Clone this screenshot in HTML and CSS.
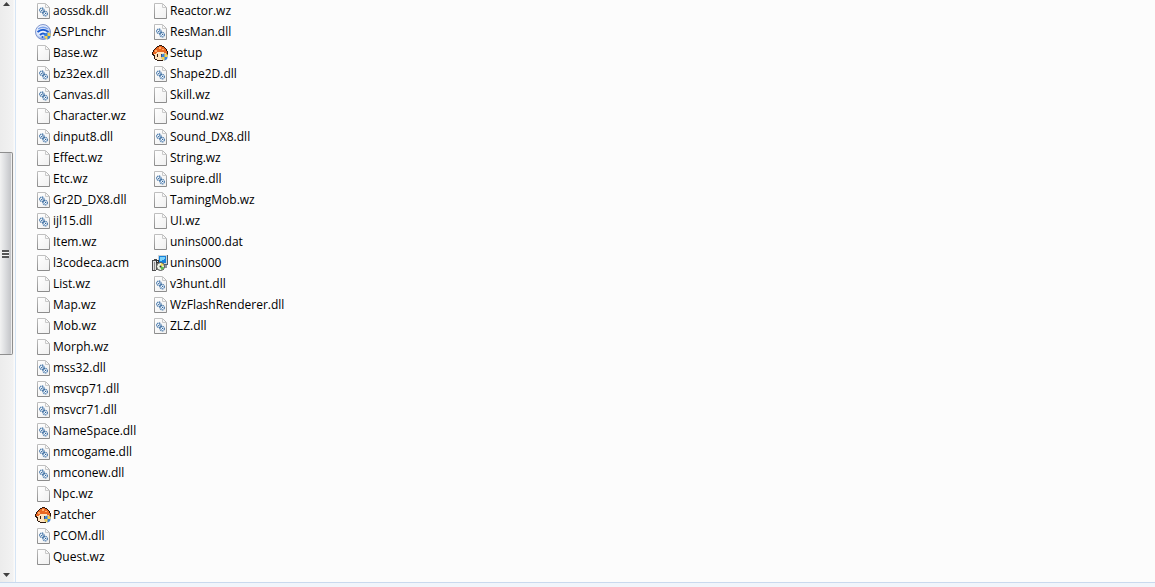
FILE: index.html
```html
<!DOCTYPE html>
<html lang="en">
<head>
  <meta charset="UTF-8">
  <title>Files</title>
  <meta name="viewport" content="width=device-width, initial-scale=1">
  <link rel="stylesheet" href="styles.css">
</head>
<body>

  <!-- Icon set -->
  <svg class="sprites" aria-hidden="true">
    <defs>
      <linearGradient id="paper" x1="0" y1="0" x2="1" y2="1">
        <stop offset="0" stop-color="#ffffff"/>
        <stop offset="1" stop-color="#f0f0f0"/>
      </linearGradient>
      <linearGradient id="edge" x1="0" y1="0" x2="0" y2="1">
        <stop offset="0" stop-color="#c0c0c0"/>
        <stop offset="1" stop-color="#8c8c8c"/>
      </linearGradient>
      <radialGradient id="ball" cx="0.4" cy="0.35" r="0.7">
        <stop offset="0" stop-color="#ffffff"/>
        <stop offset="0.6" stop-color="#dbe6fb"/>
        <stop offset="1" stop-color="#6286d2"/>
      </radialGradient>
    </defs>

    <symbol id="file" viewBox="0 0 16 16">
      <path d="M2.500 .5H10.500L14.500 4.500V15.500H2.500Z" fill="url(#paper)" stroke="url(#edge)"/>
      <path d="M10.500 1V4.500H14" fill="none" stroke="#cacaca"/>
    </symbol>

    <symbol id="dll" viewBox="0 0 16 16">
      <use href="#file"/>
      <g fill="#f2f8fe" stroke="#5783b0" stroke-width="1.300" stroke-dasharray="1.400 .5">
        <circle cx="6.800" cy="7.200" r="2.200"/>
        <circle cx="10.200" cy="10.700" r="2.200"/>
      </g>
      <path d="M6 8L8 6.500M7.500 10L10 7.800M9.500 11.500L11 10" stroke="#2f6399"/>
    </symbol>

    <symbol id="shield" viewBox="0 0 8 8">
      <path d="M4 0L7.500 1V4Q7.500 7 4 8Q.5 7 .5 4V1Z" fill="#3b83dc"/>
      <path d="M4 0L7.500 1V4H4ZM.5 4H4V8Q.5 7 .5 4Z" fill="#f3d04e"/>
    </symbol>

    <symbol id="launcher" viewBox="0 0 16 16">
      <circle cx="8" cy="8" r="7.500" fill="url(#ball)" stroke="#8298cd"/>
      <path d="M3 5Q8 1.500 13 5" fill="none" stroke="#7da3ea" stroke-width="1.500"/>
      <path d="M2.500 8Q8 3.500 13.500 8" fill="none" stroke="#1d5cd0" stroke-width="2"/>
      <path d="M5 11Q8 8 11 11" fill="none" stroke="#1d5cd0" stroke-width="2"/>
      <circle cx="7.500" cy="13" r="1" fill="#1d5cd0"/>
      <use href="#shield" x="9" y="8" width="7" height="8"/>
    </symbol>

    <symbol id="mushroom" viewBox="0 0 16 16" shape-rendering="crispEdges">
      <path d="M7 0H10V1H12V2H13V3H14V4H15V6H16V10H15V13H13V15H11V16H5V15H3V14H2V11H1V10H0V7H1V5H2V4H3V3H4V2H5V1H7Z" fill="#2c160c"/>
      <path d="M7 1H10V2H12V3H13V4H14V6H15V9H14V8H12V7H5V8H4V9H1V7H2V5H3V4H4V3H5V2H7Z" fill="#e96723"/>
      <path d="M7 2H9V4H7ZM3 5H5V7H3ZM10 4H12V5H10Z" fill="#ffad69"/>
      <path d="M5 7H12V8H14V13H12V14H11V15H5V14H3V10H2V9H4V8H5Z" fill="#ffe3be"/>
      <path d="M5 9H6V12H5ZM9 9H10V12H9Z" fill="#3a1d0e"/>
      <use href="#shield" x="9" y="8" width="7" height="8" shape-rendering="auto"/>
    </symbol>

    <symbol id="installer" viewBox="0 0 16 16" shape-rendering="crispEdges">
      <path d="M6 0H16V10H6Z" fill="#53606c"/>
      <path d="M6 0H15V9H6Z" fill="#c9d2d8"/>
      <path d="M7 1H14V8H7Z" fill="#1682da"/>
      <path d="M8 2H13V4H12V5H10V6H8Z" fill="#7ed3fb"/>
      <path d="M11 10H15V13H11Z" fill="#8d969d"/>
      <path d="M0 5H2V4H5V15H4V16H0Z" fill="#4b4b4b"/>
      <path d="M1 6H4V15H1Z" fill="#e0e0e0"/>
      <path d="M2 7H3V15H2Z" fill="#8b8b8b"/>
      <path d="M4 5H7V8H4Z" fill="#333"/>
      <path d="M5 6H6V7H5Z" fill="#ddd"/>
      <g shape-rendering="auto">
        <circle cx="8.500" cy="11.500" r="4" fill="#eef3e6" stroke="#444"/>
        <path d="M8.500 11.500L9 8L12 10Z" fill="#f4df4c"/>
        <path d="M8.500 11.500L12 12Q11.500 14.500 9 15Z" fill="#5fc34d"/>
        <circle cx="8.500" cy="11.500" r="1" fill="#333"/>
      </g>
    </symbol>
  </svg>

  <main class="explorer">
    <div class="scrollbar">
      <button class="scroll-arrow" type="button" aria-label="Scroll up">
        <svg viewBox="0 0 7 4"><path d="M0 4L3.500 0L7 4Z"/></svg>
      </button>
      <div class="track">
        <div class="track-above"></div>
        <button class="thumb" type="button" aria-label="Scroll position">
          <span class="grip"></span>
        </button>
        <div class="track-below"></div>
      </div>
      <button class="scroll-arrow" type="button" aria-label="Scroll down">
        <svg viewBox="0 0 7 4"><path d="M0 0L3.500 4L7 0Z"/></svg>
      </button>
    </div>

    <ul class="files">
      <li><svg><use href="#dll"/></svg>aossdk.dll</li>
      <li><svg><use href="#launcher"/></svg>ASPLnchr</li>
      <li><svg><use href="#file"/></svg>Base.wz</li>
      <li><svg><use href="#dll"/></svg>bz32ex.dll</li>
      <li><svg><use href="#dll"/></svg>Canvas.dll</li>
      <li><svg><use href="#file"/></svg>Character.wz</li>
      <li><svg><use href="#dll"/></svg>dinput8.dll</li>
      <li><svg><use href="#file"/></svg>Effect.wz</li>
      <li><svg><use href="#file"/></svg>Etc.wz</li>
      <li><svg><use href="#dll"/></svg>Gr2D_DX8.dll</li>
      <li><svg><use href="#dll"/></svg>ijl15.dll</li>
      <li><svg><use href="#file"/></svg>Item.wz</li>
      <li><svg><use href="#file"/></svg>l3codeca.acm</li>
      <li><svg><use href="#file"/></svg>List.wz</li>
      <li><svg><use href="#file"/></svg>Map.wz</li>
      <li><svg><use href="#file"/></svg>Mob.wz</li>
      <li><svg><use href="#file"/></svg>Morph.wz</li>
      <li><svg><use href="#dll"/></svg>mss32.dll</li>
      <li><svg><use href="#dll"/></svg>msvcp71.dll</li>
      <li><svg><use href="#dll"/></svg>msvcr71.dll</li>
      <li><svg><use href="#dll"/></svg>NameSpace.dll</li>
      <li><svg><use href="#dll"/></svg>nmcogame.dll</li>
      <li><svg><use href="#dll"/></svg>nmconew.dll</li>
      <li><svg><use href="#file"/></svg>Npc.wz</li>
      <li><svg><use href="#mushroom"/></svg>Patcher</li>
      <li><svg><use href="#dll"/></svg>PCOM.dll</li>
      <li><svg><use href="#file"/></svg>Quest.wz</li>
      <li><svg><use href="#file"/></svg>Reactor.wz</li>
      <li><svg><use href="#dll"/></svg>ResMan.dll</li>
      <li><svg><use href="#mushroom"/></svg>Setup</li>
      <li><svg><use href="#dll"/></svg>Shape2D.dll</li>
      <li><svg><use href="#file"/></svg>Skill.wz</li>
      <li><svg><use href="#file"/></svg>Sound.wz</li>
      <li><svg><use href="#dll"/></svg>Sound_DX8.dll</li>
      <li><svg><use href="#file"/></svg>String.wz</li>
      <li><svg><use href="#dll"/></svg>suipre.dll</li>
      <li><svg><use href="#file"/></svg>TamingMob.wz</li>
      <li><svg><use href="#file"/></svg>UI.wz</li>
      <li><svg><use href="#file"/></svg>unins000.dat</li>
      <li><svg><use href="#installer"/></svg>unins000</li>
      <li><svg><use href="#dll"/></svg>v3hunt.dll</li>
      <li><svg><use href="#dll"/></svg>WzFlashRenderer.dll</li>
      <li><svg><use href="#dll"/></svg>ZLZ.dll</li>
    </ul>
  </main>

  <footer class="details"></footer>

</body>
</html>
```

FILE: styles.css
```css
:root {
  --pane: #fcfcfc;
  --line: #d6e5f5;
  --details: #f1f5fb;
}

* {
  box-sizing: border-box;
}

body {
  margin: 0;
  min-height: 100vh;
  display: flex;
  flex-direction: column;
  background: var(--pane);
  color: #000;
  font-family: "Segoe UI", "Open Sans", "Noto Sans", sans-serif;
  font-size: 12px;
}

.sprites {
  position: absolute;
  width: 0;
  height: 0;
}

.explorer {
  flex: 1;
  display: flex;
}

/* Scrollbar */
.scrollbar {
  width: 16px;
  flex-shrink: 0;
  display: flex;
  flex-direction: column;
  background: linear-gradient(to right, #ececec, #f2f2f2 13px, #fafafa 14px);
  border-right: 1px solid var(--line);
}

.scroll-arrow {
  height: 14px;
  width: 12px;
  padding: 0;
  border: none;
  background: none;
  display: flex;
  align-items: center;
  justify-content: center;
}

.scroll-arrow:first-child {
  height: 8px;
}

.scroll-arrow svg {
  width: 7px;
  height: 4px;
  fill: #404040;
}

.track {
  flex: 1;
  display: flex;
  flex-direction: column;
}

.track-above {
  flex: 145;
}

.thumb {
  flex: 201;
  width: 13px;
  padding: 0;
  border: 1px solid #8e8e8e;
  border-left: none;
  border-radius: 0 2px 2px 0;
  box-shadow: inset -1px 0 #eee;
  background: linear-gradient(to right, #f2f2f2, #dedfe1 40%, #bfc0c4);
}

.track-below {
  flex: 214;
}

.grip {
  display: block;
  width: 7px;
  height: 8px;
  margin-left: 2px;
  background: repeating-linear-gradient(#555 0 2px, #f5f5f5 2px 3px);
}

/* File list */
.files {
  margin: 0;
  padding: 0 0 0 19px;
  list-style: none;
  display: grid;
  grid-auto-flow: column;
  grid-template-rows: repeat(27, 21px);
  grid-template-columns: 117px auto;
}

.files li {
  display: flex;
  align-items: center;
  gap: 2px;
  white-space: nowrap;
}

.files svg {
  width: 16px;
  height: 16px;
}

/* Details strip */
.details {
  height: 5px;
  background: var(--details);
  border-top: 1px solid #c9d9ee;
}
```
